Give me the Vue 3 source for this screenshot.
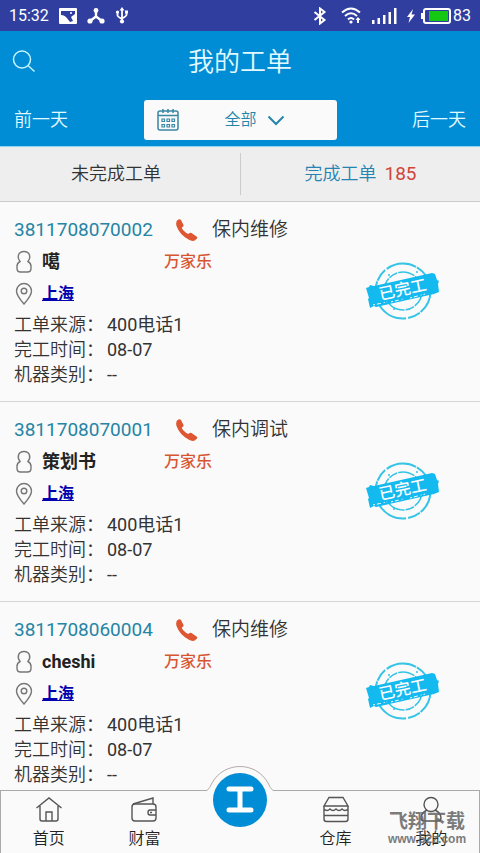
<script setup>
import { ref } from 'vue'

const range = ref('全部')
const orders = [
  { id: '3811708070002', type: '保内维修', name: '噶', brand: '万家乐', city: '上海', source: '400电话1', date: '08-07', kind: '--' },
  { id: '3811708070001', type: '保内调试', name: '策划书', brand: '万家乐', city: '上海', source: '400电话1', date: '08-07', kind: '--' },
  { id: '3811708060004', type: '保内维修', name: 'cheshi', brand: '万家乐', city: '上海', source: '400电话1', date: '08-07', kind: '--' }
]
</script>

<template>
  <div class="screen">
    <div class="status">
      <span class="clock">15:32</span>
      <svg width="18" height="16" viewBox="0 0 18 16"><path fill="#fff" fill-rule="evenodd" d="M1 0h16q1 0 1 1v14q0 1-1 1H1q-1 0-1-1V1q0-1 1-1zM2 3v4q3 0 5 2l4 5 3-1-2-4 4-3V3zM12 4a1 1 0 1 1 0 2 1 1 0 0 1 0-2z" /></svg>
      <svg width="18" height="16" viewBox="0 0 18 16"><g fill="#fff"><circle cx="9" cy="2.500" r="2.400" /><circle cx="3" cy="13" r="2.600" /><circle cx="15" cy="13" r="2.600" /></g><path d="M9 3v6M3 13l6-4.500 6 4.500" fill="none" stroke="#fff" stroke-width="2.400" /></svg>
      <svg width="14" height="17" viewBox="0 0 14 17"><g fill="none" stroke="#fff" stroke-width="1.800"><path d="M7 2v12M2.500 5v3.500q0 1 4.500 3.500M11.500 5v3q0 1-4.500 3.500" /></g><g fill="#fff"><path d="M7 0l2.500 3.500h-5zM10 3.500h3v3h-3z" /><circle cx="2.500" cy="5" r="1.600" /><circle cx="7" cy="14.500" r="2.100" /></g></svg>
      <span class="spacer"></span>
      <svg width="14" height="18" viewBox="0 0 14 18"><path d="M1.500 5l10 8L7 16.500v-15L11.500 5l-10 8" fill="none" stroke="#fff" stroke-width="2" /></svg>
      <svg class="wifi" width="21" height="17" viewBox="0 0 21 17"><g fill="none" stroke="#fff" stroke-width="2"><path d="M1 5.500q9-8 18 0M4 9q6-5.500 12 0M7 12.500q3-3 6 0" /></g><circle cx="10" cy="15" r="1.600" fill="#fff" /><path d="M17 10l2.500 3h-1.500v3h-2v-3h-1.500z" fill="#fff" /></svg>
      <svg class="signal" width="25" height="16" viewBox="0 0 25 16"><path fill="#fff" d="M0 12h2.500v4H0zM5.500 10H8v6H5.500zM11 7h2.500v9H11zM16.500 4H19v12h-2.500zM22 0h2.500v16H22z" /></svg>
      <svg width="8" height="14" viewBox="0 0 8 14"><path fill="#fff" d="M6 0L0 8h3l-1.500 6L8 5.500H4.500z" /></svg>
      <svg class="battery" width="30" height="16" viewBox="0 0 30 16"><rect x="3" y="1" width="26" height="14" rx="2" fill="none" stroke="#fff" stroke-width="2" /><path d="M0 5h3v6H0z" fill="#fff" /><path d="M8 3h19v10H8z" fill="#14c814" /></svg>
      <span class="percent">83</span>
    </div>

    <header class="header">
      <div class="titlebar">
        <button class="plain search" aria-label="搜索"><svg width="24" height="24" viewBox="0 0 24 24"><g fill="none" stroke="#c5f4ff" stroke-width="1.500"><circle cx="10" cy="9.500" r="8.500" /><path d="M16 15.500l6.500 6" /></g></svg></button>
        <h1>我的工单</h1>
      </div>
      <div class="daybar">
        <button class="plain day">前一天</button>
        <button class="picker">
          <svg width="24" height="24" viewBox="0 0 24 24"><g fill="none" stroke="#3a87a5" stroke-width="1.500"><rect x="2" y="3" width="20" height="19" rx="2" /><path d="M2 7.500h20M7 1v4M12 1v4M17 1v4" /></g><g fill="none" stroke="#3a87a5" stroke-width="1.200"><path d="M6 11h2.500v2.500H6zM11 11h2.500v2.500H11zM16 11h2.500v2.500H16zM6 16.500h2.500V19H6zM11 16.500h2.500V19H11zM16 16.500h2.500V19H16z" /></g></svg>
          <span class="range">{{ range }}</span>
          <svg width="18" height="11" viewBox="0 0 18 11"><path d="M1.500 1.500L9 9l7.500-7.500" fill="none" stroke="#2684aa" stroke-width="2" /></svg>
        </button>
        <button class="plain day">后一天</button>
      </div>
    </header>

    <div class="tabs">
      <button class="plain tab">未完成工单</button>
      <button class="plain tab active">完成工单<span class="count">185</span></button>
    </div>

    <main class="list">
      <article v-for="order in orders" :key="order.id" class="card">
        <div class="row head">
          <span class="number">{{ order.id }}</span>
          <svg width="22" height="22" viewBox="0 0 22 22"><path fill="#df5732" d="M1.500 1Q4-.5 5 1l2.500 5q.5 1.500-1.500 2.500-.5 1 2 3.500t4.500 3q1.500-2 3-1l5 3.500q1.500 1 0 2.500-3 3.500-8 .5Q3.500 15.500.5 7q-1-4 1-6z" /></svg>
          <span class="type">{{ order.type }}</span>
        </div>
        <div class="row person">
          <svg width="20" height="24" viewBox="0 0 20 24"><path d="M6 11.500C2.500 7 4.500 1.500 10 1.500s7.500 5.500 4 10q3 1.500 3 5v2q0 3.500-3.500 3.500h-7Q3 22 3 18.500v-2q0-3.500 3-5z" fill="none" stroke="#777" stroke-width="1.400" /></svg>
          <strong class="name">{{ order.name }}</strong>
          <strong class="brand">{{ order.brand }}</strong>
        </div>
        <div class="row place">
          <svg width="20" height="24" viewBox="0 0 20 24"><g fill="none" stroke="#777" stroke-width="1.400"><path d="M10 22Q2.500 13.500 2.500 9a7.500 7.500 0 0 1 15 0q0 4.500-7.500 13z" /><circle cx="10" cy="9" r="2.800" /></g></svg>
          <a href="#">{{ order.city }}</a>
        </div>
        <dl>
          <div><dt>工单来源：</dt><dd>{{ order.source }}</dd></div>
          <div><dt>完工时间：</dt><dd>{{ order.date }}</dd></div>
          <div><dt>机器类别：</dt><dd>{{ order.kind }}</dd></div>
        </dl>
        <svg class="stamp" width="76" height="64" viewBox="0 0 76 64">
          <g fill="none" stroke="#35c3e6">
            <circle cx="38" cy="32" r="27.500" stroke-width="2" stroke-dasharray="24 1 13 2 31 1" />
            <circle cx="38" cy="32" r="19" stroke-width="1.500" stroke-dasharray="17 1 9 1" />
          </g>
          <path fill="#13baf0" d="M1 29l3-1 1-2 4 1 58-13 3 1 2 6 2 1-1 3 1 8-5 2-58 13-2-1-4 2-2-9 1-1z" />
          <path d="M8 46l14-3m4 0l12-3m7-1l15-4" fill="none" stroke="#fafafa" stroke-width="1" stroke-dasharray="2 2 4 3 1 2" />
          <g fill="#35c3e6"><circle cx="24" cy="16" r="1" /><circle cx="52" cy="13" r="1" /><circle cx="29" cy="50" r="1" /></g>
          <text x="38" y="36" transform="rotate(-12 38 32)" text-anchor="middle">已完工</text>
        </svg>
      </article>
    </main>

    <nav class="nav">
      <svg class="hump" width="68" height="26" viewBox="0 0 68 26"><path d="M0 24.500h1Q4 22 6 17C18-5 50-5 62 17q2 5 5 7.500h1V26H0z" fill="#fafafa" /><path d="M0 24.500h1Q4 22 6 17C18-5 50-5 62 17q2 5 5 7.500h1" fill="none" stroke="#b5aaa8" /></svg>
      <a href="#" class="item"><svg width="28" height="28" viewBox="0 0 28 28"><g fill="none" stroke="#555" stroke-width="1.400"><path d="M1.500 12L14 2l12.500 10M5 10v13q0 2 2 2h14q2 0 2-2V10M11 25v-9h6v9" /></g></svg><span>首页</span></a>
      <a href="#" class="item"><svg width="28" height="28" viewBox="0 0 28 28"><g fill="none" stroke="#555" stroke-width="1.400"><rect x="2" y="8" width="24" height="17" rx="3" /><path d="M3 8L23 2v6M26 14h-6q-2 0-2 2.500t2 2.500h6M20 16.500h2" /></g></svg><span>财富</span></a>
      <div class="center"><button class="plain round" aria-label="工单"><svg width="34" height="34" viewBox="0 0 34 34"><path d="M6 6h22M17 6v21M6 27h22" fill="none" stroke="#fff" stroke-width="5" stroke-linecap="round" /></svg></button></div>
      <a href="#" class="item"><svg width="28" height="28" viewBox="0 0 28 28"><g fill="none" stroke="#555" stroke-width="1.400"><path d="M7 1.500h14l5 8.500H2zM2 10v13q0 2.500 2.500 2.500h19q2.500 0 2.500-2.500V10M2 19.500h24M2 13q3 3 6 0 3 3 6 0 3 3 6 0 3 3 6 0" /></g></svg><span>仓库</span></a>
      <a href="#" class="item"><svg width="28" height="28" viewBox="0 0 28 28"><g fill="none" stroke="#555" stroke-width="1.400"><circle cx="14" cy="8.500" r="7" /><path d="M10 14q-6 3-6 8 0 3 3 3h14q3 0 3-3 0-5-6-8" /></g></svg><span>我的</span></a>
      <div class="watermark"><strong>飞翔下载</strong><span>www.52z.com</span></div>
    </nav>
  </div>
</template>

<style>
body { margin: 0; background: #fafafa; }
</style>

<style scoped>
* { box-sizing: border-box; }
svg { display: block; flex: none; }
.screen { height: 100vh; display: flex; flex-direction: column; overflow: hidden; background: #fafafa; color: #333; font: 350 18px/26px Roboto, "Noto Sans CJK SC", sans-serif; }
.plain { border: 0; padding: 0; background: none; color: inherit; font: inherit; }
.status { flex: none; height: 31px; display: flex; align-items: center; gap: 10px; padding: 0 9px; background: #303f9f; color: #fff; font-size: 16px; font-weight: 400; }
.spacer { flex: 1; }
.battery { margin-left: -4px; }
.percent { margin-left: -8px; }
.wifi { margin-left: 4px; }
.header { flex: none; background: #008dd5; color: #e2faff; border-bottom: 1px solid #8fd8ee; }
.titlebar { height: 62px; display: grid; grid-template-columns: 1fr auto 1fr; align-items: center; padding: 0 12px; }
.search { width: 24px; }
h1 { margin: 0; font-size: 26px; font-weight: 350; line-height: 36px; }
.daybar { display: grid; grid-template-columns: 1fr 193px 1fr; align-items: center; padding: 7px 14px 6px; }
.day { font-size: 18px; justify-self: start; }
.day:last-child { justify-self: end; }
.picker { height: 40px; display: flex; align-items: center; border: 0; border-radius: 3px; padding: 0 12px; background: #fafafa; color: #2684aa; font: 350 16px/24px Roboto, "Noto Sans CJK SC", sans-serif; }
.range { margin-left: auto; margin-right: 10px; }
.picker svg:last-child { margin-right: 40px; }
.tabs { flex: none; display: flex; height: 55px; padding: 6px 0; background: #eee; border-bottom: 1px solid #ccc; }
.tab { width: 50%; padding-right: 8px; }
.tab.active { border-left: 1px solid #ccc; padding-right: 0; color: #2684b3; }
.count { margin-left: 8px; font-size: 19px; font-weight: 400; color: #d04538; }
.list { flex: 1; min-height: 0; overflow: hidden; }
.card { position: relative; height: 200px; padding: 14px; border-bottom: 1px solid #d5d5d5; }
.row { display: flex; align-items: center; }
.head { height: 28px; }
.number { width: 162px; font-size: 19px; font-weight: 400; color: #2684a5; }
.type { margin-left: 14px; font-size: 19px; }
.person { height: 36px; }
.name { width: 122px; margin-left: 8px; font-size: 18px; font-weight: 700; color: #222; }
.brand { font-size: 16px; font-weight: 500; color: #d95530; }
.place { height: 28px; }
.place a { margin-left: 8px; color: #0000b0; font-size: 16px; font-weight: 700; }
dl { margin: 4px 0 0; }
dl div { display: flex; gap: 3px; height: 25px; line-height: 25px; }
dd { margin: 0; font-weight: 400; font-family: Roboto, "Noto Sans CJK SC", sans-serif; }
.stamp { position: absolute; right: 39px; top: 57px; }
.stamp text { fill: #fafafa; font: 500 16px "Noto Sans CJK SC", sans-serif; }
.nav { position: relative; flex: none; height: 63px; display: flex; border: 1px solid #aaa; border-bottom: 0; background: #fafafa; }
.item { flex: 1; display: flex; flex-direction: column; align-items: center; gap: 2px; padding-top: 5px; color: #222; font-size: 16px; line-height: 26px; text-decoration: none; }
.center { flex: 1; display: flex; justify-content: center; }
.hump { position: absolute; left: 50%; top: -25px; margin-left: -34px; }
.round { position: relative; width: 54px; height: 54px; margin-top: -18px; display: flex; align-items: center; justify-content: center; border-radius: 50%; background: #008dd5; }
.watermark { position: absolute; right: 13px; top: 21px; width: 78px; display: flex; flex-direction: column; align-items: center; color: #666; opacity: .85; pointer-events: none; }
.watermark strong { font-size: 19px; font-weight: 700; line-height: 20px; }
.watermark span { font: 700 12px/14px "Liberation Sans", sans-serif; }
</style>
